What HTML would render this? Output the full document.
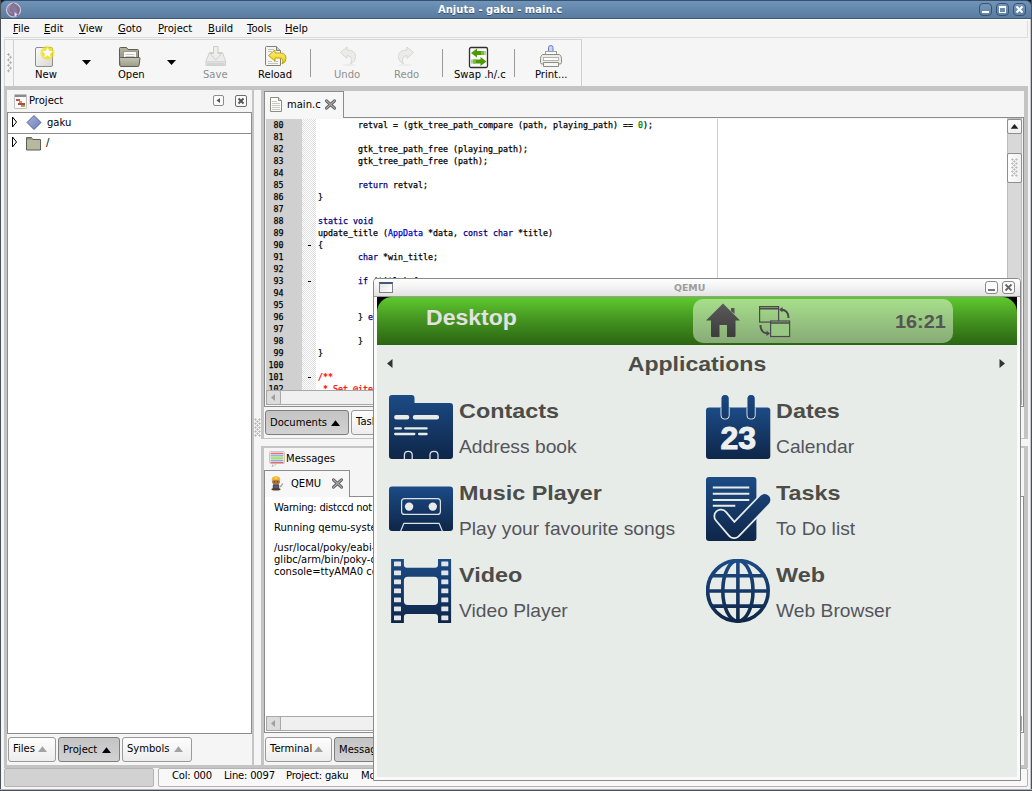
<!DOCTYPE html>
<html>
<head>
<meta charset="utf-8">
<title>Anjuta - gaku - main.c</title>
<style>
html,body{margin:0;padding:0;}
body{width:1032px;height:791px;overflow:hidden;position:relative;background:#f5f5f5;font-family:"DejaVu Sans","Liberation Sans",sans-serif;font-size:10px;color:#000;}
.a{position:absolute;}
.t{position:absolute;white-space:pre;line-height:12px;margin-top:1px;}
.q.t,#code .t{margin-top:0}
.u{text-decoration:underline;}
.dis{color:#8e8e8e;}
#code .t{font-family:"DejaVu Sans Mono","Liberation Mono",monospace;font-size:8.3px;letter-spacing:0.003px;line-height:12px;color:#000;-webkit-text-stroke:0.25px;}
.kw{color:#00007f;}
.ty{color:#0000d0;}
.cm{color:#ff0000;}
.nm{color:#007f00;}
.btn{position:absolute;box-sizing:border-box;border:1px solid #9a9a9a;border-radius:3px;background:linear-gradient(#fdfdfd,#ededed);}
.btn.on{background:linear-gradient(#c4c4c4,#d2d2d2);border-color:#7e7e7e;}
.q{font-family:"Liberation Sans",sans-serif;}
</style>
</head>
<body>
<!-- ===== main window chrome ===== -->
<div class="a" style="left:0;top:0;width:1032px;height:10px;background:#10151c;"></div>
<div class="a" id="titlebar" style="left:0;top:0;width:1032px;height:19px;background:linear-gradient(#7194b8,#668aae 40%,#5a7b9f);border:1px solid #34506f;border-bottom:1px solid #3d5674;border-radius:6px 6px 0 0;box-sizing:border-box;"></div>
<div class="a" style="left:1px;top:19px;width:1029px;height:1px;background:#fff;"></div>
<div class="t" style="left:438px;top:3px;font-weight:bold;color:#fff;text-shadow:0 1px 0 #34506f;">Anjuta - gaku - main.c</div>
<svg class="a" style="left:5px;top:1px;" width="18" height="17" viewBox="0 0 18 17"><defs><radialGradient id="ag" cx="0.4" cy="0.35"><stop offset="0" stop-color="#b8a8c4"/><stop offset="1" stop-color="#7c6a90"/></radialGradient></defs><circle cx="8.500" cy="9" r="7" fill="url(#ag)" stroke="#d4c8dc" stroke-width="1.200"/><path d="M7 4 Q8 1.500 9 2.500 Q9.500 4 12 6.500 Q14 10 13 15 H9 Q10 11 7 10 Q4.500 10.500 5 8 Q5 5.500 7 4 Z" fill="#8a789c" stroke="#6c5a80" stroke-width="0.6"/><path d="M9.500 11 L12.500 13.500 L9.500 16 Z" fill="#e8dcf0"/></svg>
<div class="a" style="left:979px;top:3px;width:13px;height:13px;box-sizing:border-box;border:1px solid #3a516f;border-radius:4px;background:linear-gradient(#7496b9,#6283a7);"></div>
<div class="a" style="left:982px;top:11px;width:7px;height:2px;background:#fff;"></div>
<div class="a" style="left:996px;top:3px;width:13px;height:13px;box-sizing:border-box;border:1px solid #3a516f;border-radius:4px;background:linear-gradient(#7496b9,#6283a7);"></div>
<div class="a" style="left:999px;top:6px;width:7px;height:7px;box-sizing:border-box;border:1px solid #fff;border-top-width:2px;"></div>
<div class="a" style="left:1013px;top:3px;width:13px;height:13px;box-sizing:border-box;border:1px solid #3a516f;border-radius:4px;background:linear-gradient(#7496b9,#6283a7);"></div>
<svg class="a" style="left:1013px;top:3px;" width="13" height="13"><path d="M3.500 3.500 L9.500 9.500 M9.500 3.500 L3.500 9.500" stroke="#fff" stroke-width="2" fill="none"/></svg>
<!-- window borders -->
<div class="a" style="left:0;top:0;width:1px;height:791px;background:#4c5058;"></div>
<div class="a" style="left:1030px;top:19px;width:1px;height:772px;background:#c4c4c4;"></div>
<div class="a" style="left:1031px;top:0;width:1px;height:791px;background:#4c5058;"></div>
<div class="a" style="left:0;top:790px;width:1032px;height:1px;background:#4c5058;"></div>
<div class="a" style="left:0;top:789px;width:1032px;height:1px;background:#b4b4b4;"></div>

<!-- ===== menubar ===== -->
<div class="a" style="left:4px;top:37px;width:1024px;height:1px;background:#dcdcdc;"></div>
<div class="a" style="left:1027px;top:21px;width:1px;height:17px;background:#dcdcdc;"></div>
<div class="t" style="left:13px;top:22px;"><span class="u">F</span>ile</div>
<div class="t" style="left:44px;top:22px;"><span class="u">E</span>dit</div>
<div class="t" style="left:79px;top:22px;"><span class="u">V</span>iew</div>
<div class="t" style="left:118px;top:22px;"><span class="u">G</span>oto</div>
<div class="t" style="left:158px;top:22px;"><span class="u">P</span>roject</div>
<div class="t" style="left:208px;top:22px;"><span class="u">B</span>uild</div>
<div class="t" style="left:247px;top:22px;"><span class="u">T</span>ools</div>
<div class="t" style="left:285px;top:22px;"><span class="u">H</span>elp</div>

<!-- ===== toolbar ===== -->
<div class="a" id="toolbar" style="left:4px;top:39px;width:578px;height:48px;box-sizing:border-box;border:1px solid #d6d6d6;border-right-color:#cfcfcf;background:#f6f6f6;"></div>
<div class="a" style="left:13px;top:40px;width:1px;height:46px;background:#d0d0d0;"></div>
<!-- handle dots -->
<svg class="a" style="left:6px;top:52px;" width="8" height="22"><path d="M1.00 2.50 h3 M2.50 1.00 v3 M3.00 5.22 h3 M4.50 3.72 v3 M1.00 7.94 h3 M2.50 6.44 v3 M3.00 10.66 h3 M4.50 9.16 v3 M1.00 13.38 h3 M2.50 11.88 v3 M3.00 16.10 h3 M4.50 14.60 v3 M1.00 18.82 h3 M2.50 17.32 v3 " stroke="#b0b0b0" stroke-width="0.9" fill="none"/></svg>
<!-- New -->
<svg class="a" style="left:33px;top:44px;" width="26" height="26" viewBox="0 0 26 26"><defs><linearGradient id="pg" x1="0" y1="0" x2="1" y2="1"><stop offset="0" stop-color="#fbfbfb"/><stop offset="1" stop-color="#d6d6d2"/></linearGradient><radialGradient id="yg"><stop offset="0.4" stop-color="#f4e000"/><stop offset="0.75" stop-color="#f0e020" stop-opacity="0.65"/><stop offset="1" stop-color="#f0e860" stop-opacity="0"/></radialGradient></defs><rect x="2.500" y="3.500" width="17" height="19" rx="1.500" fill="url(#pg)" stroke="#8e8e8a"/><circle cx="14.5" cy="8.9" r="8" fill="url(#yg)"/><path d="M14.50 2.70 L16.32 6.39 L20.40 6.98 L17.45 9.86 L18.14 13.92 L14.50 12.00 L10.86 13.92 L11.55 9.86 L8.60 6.98 L12.68 6.39 Z" fill="#fff" stroke="#f4dc20" stroke-width="0.7" stroke-linejoin="round"/></svg>
<div class="t" style="left:35px;top:68px;">New</div>
<svg class="a" style="left:81px;top:59px;" width="11" height="7"><path d="M1 1 H10 L5.500 6 Z" fill="#000"/></svg>
<!-- Open -->
<svg class="a" style="left:117px;top:45px;" width="26" height="24" viewBox="0 0 26 24"><defs><linearGradient id="fo" x1="0" y1="0" x2="0" y2="1"><stop offset="0" stop-color="#b4b4a0"/><stop offset="1" stop-color="#8a8a78"/></linearGradient><linearGradient id="ff" x1="0" y1="0" x2="0" y2="1"><stop offset="0" stop-color="#c4c4b4"/><stop offset="1" stop-color="#9c9c88"/></linearGradient></defs><path d="M3.500 2.500 H9.500 L11 4.500 H20.500 Q21.500 4.500 21.500 5.500 V20 H3 Q2.500 20 2.500 19 V3.500 Q2.500 2.500 3.500 2.500 Z" fill="url(#fo)" stroke="#5c5c50"/><rect x="6.500" y="6.500" width="13" height="9" fill="#fafafa" stroke="#9a9a90"/><path d="M8.500 9.500 h9 M8.500 11.500 h9" stroke="#c8c8c0"/><path d="M2.500 13.500 Q2.500 12.500 3.500 12.500 H22 Q23 12.500 23 13.500 L22 20.500 Q21.800 21.500 20.800 21.500 H4 Q3 21.500 2.900 20.500 Z" fill="url(#ff)" stroke="#5c5c50"/></svg>
<div class="t" style="left:118px;top:68px;">Open</div>
<svg class="a" style="left:166px;top:59px;" width="11" height="7"><path d="M1 1 H10 L5.500 6 Z" fill="#000"/></svg>
<!-- Save (disabled) -->
<svg class="a" style="left:203px;top:44px;" width="26" height="26" viewBox="0 0 26 26"><path d="M3 17 L6.500 8.500 H19.500 L22.500 17 V21.500 H3 Z" fill="#ececec" stroke="#cfcfcf"/><path d="M3.500 17.500 H22" stroke="#d8d8d8"/><rect x="4" y="18.500" width="17.500" height="3" fill="#d4d4d4"/><path d="M10.500 2.500 H15 V9.500 H18.500 L12.800 16 L7 9.500 H10.500 Z" fill="#eeeeec" stroke="#cdcdc8"/></svg>
<div class="t dis" style="left:203px;top:68px;">Save</div>
<!-- Reload -->
<svg class="a" style="left:262px;top:44px;" width="28" height="26" viewBox="0 0 28 26"><defs><linearGradient id="ya" x1="0" y1="0" x2="0" y2="1"><stop offset="0" stop-color="#fdf28a"/><stop offset="1" stop-color="#e8c800"/></linearGradient></defs><path d="M4.500 2.500 H14.500 L18.500 6.500 V21.500 H4.500 Q3.500 21.500 3.500 20.500 V3.500 Q3.500 2.500 4.500 2.500 Z" fill="#f4f4f2" stroke="#80807a"/><path d="M14.500 2.500 V6.500 H18.500" fill="#d0d0cc" stroke="#80807a"/><path d="M6 5.500 h6 M6 7.500 h4 M6 17.500 h4 M6 19.500 h10 M12 17.500 h4" stroke="#c4c4bc"/><path d="M6.500 11.500 L13 6 V9 H19 Q24 9.500 24 14.500 Q24 18.500 20 20 Q21.500 17.500 20.500 15.500 Q19.500 14 17 14 H13 V17 Z" fill="url(#ya)" stroke="#b89c00" stroke-width="0.9"/></svg>
<div class="t" style="left:258px;top:68px;">Reload</div>
<div class="a" style="left:310px;top:49px;width:1px;height:28px;background:#9a9a9a;"></div>
<!-- Undo (disabled) -->
<svg class="a" style="left:338px;top:45px;" width="22" height="22" viewBox="0 0 22 22"><path d="M2.500 7.500 L9 2 V5 Q17.500 5 17.500 11.500 Q17.500 16.500 12.500 19 Q13.500 17.500 13.500 14.500 Q13 10.500 9 10.500 V13.500 Z" fill="#ebebe8" stroke="#d4d4d0" stroke-width="0.9"/><ellipse cx="11" cy="20" rx="7" ry="1.200" fill="#ececec"/></svg>
<div class="t dis" style="left:334px;top:68px;">Undo</div>
<!-- Redo (disabled) -->
<svg class="a" style="left:394px;top:45px;" width="22" height="22" viewBox="0 0 22 22"><path d="M19.500 7.500 L13 2 V5 Q4.500 5 4.500 11.500 Q4.500 16.500 9.500 19 Q8.500 17.500 8.500 14.500 Q9 10.500 13 10.500 V13.500 Z" fill="#ebebe8" stroke="#d4d4d0" stroke-width="0.9"/><ellipse cx="11" cy="20" rx="7" ry="1.200" fill="#ececec"/></svg>
<div class="t dis" style="left:394px;top:68px;">Redo</div>
<div class="a" style="left:442px;top:49px;width:1px;height:28px;background:#9a9a9a;"></div>
<!-- Swap -->
<svg class="a" style="left:468px;top:46px;" width="22" height="23" viewBox="0 0 22 23"><rect x="1.500" y="1.500" width="18" height="20" rx="1.500" fill="#fafafa" stroke="#303030" stroke-width="1.300"/><path d="M3 7 L9 2.500 V5 H16 V9 H9 V11.500 Z" fill="#4e9a06"/><path d="M18.500 15.500 L12.500 11 V13.500 H5 V17.500 H12.500 V20 Z" fill="#4e9a06"/><rect x="13" y="5" width="5" height="4" fill="#8cc460" opacity="0.7"/><rect x="3" y="13.500" width="5" height="4" fill="#8cc460" opacity="0.7"/></svg>
<div class="t" style="left:454px;top:68px;">Swap .h/.c</div>
<div class="a" style="left:514px;top:49px;width:1px;height:28px;background:#9a9a9a;"></div>
<!-- Print -->
<svg class="a" style="left:538px;top:44px;" width="26" height="26" viewBox="0 0 26 26"><path d="M10.500 8 V3.500 Q10.500 1.500 12.800 1.500 Q15 1.500 15 3.500 V8" fill="#c8d4f0" stroke="#6a80c0"/><rect x="7.500" y="7.500" width="11" height="5" fill="#fcfcfc" stroke="#a0a09a"/><path d="M4.500 10.500 H21.500 Q23.500 12 23.500 14.500 V18.500 Q23.500 20 22 20 H4 Q2.500 20 2.500 18.500 V14.500 Q2.500 12 4.500 10.500 Z" fill="#ecece8" stroke="#8c8c86"/><rect x="5.500" y="13.500" width="15" height="3" fill="#fff" stroke="#b4b4ae"/><path d="M5.500 18.500 H20.500 V22.500 H5.500 Z" fill="#f6f6f4" stroke="#8c8c86"/></svg>
<div class="t" style="left:535px;top:68px;">Print...</div>


<!-- ===== dock background ===== -->
<div class="a" id="dock" style="left:4px;top:86px;width:1024px;height:682px;background:#c4c4c4;"></div>
<!-- left panel -->
<div class="a" style="left:7px;top:90px;width:245px;height:675px;background:#f5f5f5;"></div>
<div class="a" style="left:14px;top:94px;width:13px;height:15px;box-sizing:border-box;border:1px solid #c0c0c0;border-radius:1px;background:#fbfbfb;"></div>
<div class="a" style="left:15px;top:95px;width:11px;height:2px;background:#8a8a8a;"></div>
<div class="a" style="left:16px;top:99px;width:4px;height:2px;background:#c0505a;"></div>
<div class="a" style="left:19px;top:101px;width:3px;height:2px;background:#b8a040;"></div>
<div class="a" style="left:18px;top:103px;width:7px;height:2px;background:#b04850;"></div>
<div class="a" style="left:21px;top:105px;width:4px;height:2px;background:#b8a040;"></div>
<div class="t" style="left:29px;top:94px;">Project</div>
<div class="a" style="left:213px;top:95px;width:11px;height:11px;box-sizing:border-box;border:1px solid #8c8c8c;border-radius:2px;background:#fafafa;"></div>
<svg class="a" style="left:213px;top:95px;" width="11" height="11"><path d="M7 3 L3.5 5.5 L7 8 Z" fill="#555"/></svg>
<div class="a" style="left:235px;top:95px;width:12px;height:12px;box-sizing:border-box;border:1px solid #6e6e6e;border-radius:2px;background:#fafafa;"></div>
<svg class="a" style="left:235px;top:95px;" width="12" height="12"><path d="M3.5 3.5 L8.5 8.5 M8.5 3.5 L3.5 8.5" stroke="#555" stroke-width="2" fill="none"/></svg>
<div class="a" style="left:7px;top:112px;width:245px;height:622px;box-sizing:border-box;border:1px solid #8c8c8c;background:#fff;"></div>
<div class="a" style="left:8px;top:133px;width:243px;height:1px;background:#8c8c8c;"></div>
<svg class="a" style="left:10px;top:115px;" width="10" height="36"><path d="M2.5 2 L6.5 7 L2.5 12 Z" fill="#fff" stroke="#000" stroke-width="1"/><path d="M2.5 22 L6.5 27 L2.5 32 Z" fill="#fff" stroke="#000" stroke-width="1"/></svg>
<svg class="a" style="left:25px;top:114px;" width="18" height="18"><defs><linearGradient id="dg" x1="0" y1="0" x2="1" y2="1"><stop offset="0" stop-color="#a8b4dc"/><stop offset="1" stop-color="#6c7cb8"/></linearGradient></defs><path d="M9 1.5 L16 8.5 L9 15.5 L2 8.5 Z" fill="url(#dg)" stroke="#5060a0" stroke-width="1"/></svg>
<div class="t" style="left:47px;top:116px;">gaku</div>
<svg class="a" style="left:25px;top:134px;" width="18" height="18"><path d="M1.5 3.5 h5 l1 2 h8 v10.5 h-14 Z" fill="#b8b8a0" stroke="#5f5f52" stroke-width="1"/><path d="M2 3.8 h4.5 l0.8 1.8 h-5.3 Z" fill="#8e8e7c"/></svg>
<div class="t" style="left:46px;top:136px;">/</div>
<div class="btn" style="left:8px;top:737px;width:48px;height:25px;"></div>
<div class="t" style="left:13px;top:742px;">Files</div><svg class="a" style="left:38px;top:746px;" width="9" height="6"><path d="M0 6 L4.500 0.300 L9 6 Z" fill="#a2a2a2"/></svg>
<div class="btn on" style="left:58px;top:737px;width:62px;height:25px;"></div>
<div class="t" style="left:63px;top:743px;">Project</div><svg class="a" style="left:102px;top:747px;" width="9" height="6"><path d="M0 6 L4.500 0.300 L9 6 Z" fill="#000"/></svg>
<div class="btn" style="left:122px;top:737px;width:70px;height:25px;"></div>
<div class="t" style="left:127px;top:742px;">Symbols</div><svg class="a" style="left:174px;top:746px;" width="9" height="6"><path d="M0 6 L4.500 0.300 L9 6 Z" fill="#a2a2a2"/></svg>

<!-- splitter between panels -->
<div class="a" style="left:254px;top:90px;width:7px;height:675px;background:#f5f5f5;"></div>
<svg class="a" style="left:254px;top:417px;" width="8" height="22"><path d="M0.2 2.5 h2.6 M1.5 1.2 v2.6 M4.2 2.5 h2.6 M5.5 1.2 v2.6 M0.2 6.5 h2.6 M1.5 5.2 v2.6 M4.2 6.5 h2.6 M5.5 5.2 v2.6 M0.2 10.5 h2.6 M1.5 9.2 v2.6 M4.2 10.5 h2.6 M5.5 9.2 v2.6 M0.2 14.5 h2.6 M1.5 13.2 v2.6 M4.2 14.5 h2.6 M5.5 13.2 v2.6 M0.2 18.5 h2.6 M1.5 17.2 v2.6 M4.2 18.5 h2.6 M5.5 17.2 v2.6 M2.2 4.5 h2.6 M3.5 3.2 v2.6 M2.2 8.5 h2.6 M3.5 7.2 v2.6 M2.2 12.5 h2.6 M3.5 11.2 v2.6 M2.2 16.5 h2.6 M3.5 15.2 v2.6 " stroke="#b4b4b4" stroke-width="0.8" fill="none"/></svg>

<!-- right top panel: editor notebook -->
<div class="a" style="left:264px;top:91px;width:760px;height:347px;background:#f5f5f5;"></div>
<div class="a" style="left:264px;top:117px;width:760px;height:290px;box-sizing:border-box;border:1px solid #8c8c8c;background:#f5f5f5;"></div>
<div class="a" style="left:264px;top:91px;width:80px;height:27px;box-sizing:border-box;border:1px solid #8c8c8c;border-bottom:none;background:#f7f7f7;"></div>
<svg class="a" style="left:269px;top:96px;" width="15" height="18"><path d="M1.5 1.5 h8 l3 3 v11 h-11 Z" fill="#fcfcfc" stroke="#8c8c84" stroke-width="1"/><path d="M9.5 1.5 v3 h3" fill="#e0e0e0" stroke="#8c8c84" stroke-width="1"/><path d="M3 5.5 h5 M3 7.5 h8 M3 9.5 h8 M3 11.5 h8 M3 13.5 h8" stroke="#c8c8c0" stroke-width="1"/></svg>
<div class="t" style="left:287px;top:98px;">main.c</div>
<svg class="a" style="left:323px;top:97px;" width="15" height="15"><path d="M3.500 3.800 L11.500 11.200 M11.500 3.800 L3.500 11.200" stroke="#555" stroke-width="3" stroke-linecap="round"/><path d="M3.500 3.800 L11.500 11.200 M11.500 3.800 L3.500 11.200" stroke="#a8a8a8" stroke-width="1.300" stroke-linecap="round"/></svg>
<div class="a" id="code" style="left:266px;top:119px;width:741px;height:271px;overflow:hidden;background:#fff;">
<div class="a" style="left:0;top:0;width:36px;height:272px;background:#d0d0d0;"></div>
<div class="a" style="left:36px;top:0;width:14px;height:272px;background:#f0f0f0;background-image:conic-gradient(#e0e0e0 25%,#fff 0 50%,#e0e0e0 0 75%,#fff 0);background-size:2px 2px;"></div>
<div class="a" style="left:451px;top:0;width:1px;height:272px;background:#b4e0b4;"></div>
<div class="t" style="left:7.5px;top:0px;">80</div>
<div class="t" style="left:52px;top:0px;tab-size:8;">	retval = (gtk_tree_path_compare (path, playing_path) == <span class="nm">0</span>);</div>
<div class="t" style="left:7.5px;top:12px;">81</div>
<div class="t" style="left:7.5px;top:24px;">82</div>
<div class="t" style="left:52px;top:24px;tab-size:8;">	gtk_tree_path_free (playing_path);</div>
<div class="t" style="left:7.5px;top:36px;">83</div>
<div class="t" style="left:52px;top:36px;tab-size:8;">	gtk_tree_path_free (path);</div>
<div class="t" style="left:7.5px;top:48px;">84</div>
<div class="t" style="left:7.5px;top:60px;">85</div>
<div class="t" style="left:52px;top:60px;tab-size:8;">	<span class="kw">return</span> retval;</div>
<div class="t" style="left:7.5px;top:72px;">86</div>
<div class="t" style="left:52px;top:72px;tab-size:8;">}</div>
<div class="t" style="left:7.5px;top:84px;">87</div>
<div class="t" style="left:7.5px;top:96px;">88</div>
<div class="t" style="left:52px;top:96px;tab-size:8;"><span class="kw">static void</span></div>
<div class="t" style="left:7.5px;top:108px;">89</div>
<div class="t" style="left:52px;top:108px;tab-size:8;">update_title (<span class="ty">AppData</span> *data, <span class="kw">const char</span> *title)</div>
<div class="t" style="left:7.5px;top:120px;">90</div>
<div class="a" style="left:42px;top:126px;width:3px;height:1px;background:#000;"></div>
<div class="t" style="left:52px;top:120px;tab-size:8;">{</div>
<div class="t" style="left:7.5px;top:132px;">91</div>
<div class="t" style="left:52px;top:132px;tab-size:8;">	<span class="kw">char</span> *win_title;</div>
<div class="t" style="left:7.5px;top:144px;">92</div>
<div class="t" style="left:7.5px;top:156px;">93</div>
<div class="a" style="left:42px;top:162px;width:3px;height:1px;background:#000;"></div>
<div class="t" style="left:52px;top:156px;tab-size:8;">	<span class="kw">if</span> (title) {</div>
<div class="t" style="left:7.5px;top:168px;">94</div>
<div class="t" style="left:52px;top:168px;tab-size:8;">		win_title = g_strdup_printf ("%s - %s", title, _("Music Player"));</div>
<div class="t" style="left:7.5px;top:180px;">95</div>
<div class="t" style="left:7.5px;top:192px;">96</div>
<div class="t" style="left:52px;top:192px;tab-size:8;">	} <span class="kw">else</span> {</div>
<div class="t" style="left:7.5px;top:204px;">97</div>
<div class="t" style="left:52px;top:204px;tab-size:8;">		win_title = g_strdup (_("Music Player"));</div>
<div class="t" style="left:7.5px;top:216px;">98</div>
<div class="t" style="left:52px;top:216px;tab-size:8;">	}</div>
<div class="t" style="left:7.5px;top:228px;">99</div>
<div class="t" style="left:52px;top:228px;tab-size:8;">}</div>
<div class="t" style="left:2.5px;top:240px;">100</div>
<div class="t" style="left:2.5px;top:252px;">101</div>
<div class="a" style="left:42px;top:258px;width:3px;height:1px;background:#000;"></div>
<div class="t" style="left:52px;top:252px;tab-size:8;"><span class="cm">/**</span></div>
<div class="t" style="left:2.5px;top:264px;">102</div>
<div class="t" style="left:52px;top:264px;tab-size:8;"><span class="cm"> * Set @iter to the next or previous item in the playlist.</span></div>
</div>
<div class="a" style="left:1007px;top:118px;width:15px;height:272px;box-sizing:border-box;border:1px solid #bdbdbd;background:#d8d8d8;"></div>
<div class="a" style="left:1007px;top:119px;width:15px;height:15px;box-sizing:border-box;border:1px solid #8e8e8e;border-radius:2px;background:linear-gradient(#fdfdfd,#efefef);"></div>
<svg class="a" style="left:1007px;top:119px;" width="15" height="15"><path d="M3.700 9.700 L7.500 5 L11.300 9.700 Z" fill="#222"/></svg>
<div class="a" style="left:1007px;top:153px;width:15px;height:30px;box-sizing:border-box;border:1px solid #8e8e8e;border-radius:2px;background:linear-gradient(90deg,#fdfdfd,#f0f0f0);"></div>
<svg class="a" style="left:1007px;top:153px;" width="15" height="30"><path d="M4.1 6.5 h2.6 M5.4 5.2 v2.6 M8.1 6.5 h2.6 M9.4 5.2 v2.6 M4.1 10.5 h2.6 M5.4 9.2 v2.6 M8.1 10.5 h2.6 M9.4 9.2 v2.6 M4.1 14.5 h2.6 M5.4 13.2 v2.6 M8.1 14.5 h2.6 M9.4 13.2 v2.6 M4.1 18.5 h2.6 M5.4 17.2 v2.6 M8.1 18.5 h2.6 M9.4 17.2 v2.6 M4.1 22.5 h2.6 M5.4 21.2 v2.6 M8.1 22.5 h2.6 M9.4 21.2 v2.6 M6.1 8.5 h2.6 M7.4 7.2 v2.6 M6.1 12.5 h2.6 M7.4 11.2 v2.6 M6.1 16.5 h2.6 M7.4 15.2 v2.6 M6.1 20.5 h2.6 M7.4 19.2 v2.6 " stroke="#b8b8b8" stroke-width="0.8" fill="none"/></svg>
<div class="a" style="left:266px;top:390px;width:756px;height:15px;box-sizing:border-box;border:1px solid #a8a8a8;background:#f0f0f0;"></div>
<div class="a" style="left:266px;top:390px;width:15px;height:15px;box-sizing:border-box;border:1px solid #a8a8a8;border-radius:2px;background:#dcdcdc;"></div>
<svg class="a" style="left:266px;top:390px;" width="15" height="15"><path d="M9 4 L5 7.5 L9 11 Z" fill="#a0a0a0"/></svg>
<!-- documents/tasks buttons -->
<div class="btn on" style="left:265px;top:410px;width:84px;height:25px;"></div>
<div class="t" style="left:270px;top:416px;">Documents</div><svg class="a" style="left:331px;top:420px;" width="9" height="6"><path d="M0 6 L4.500 0.300 L9 6 Z" fill="#000"/></svg>
<div class="btn" style="left:351px;top:410px;width:60px;height:25px;"></div>
<div class="t" style="left:356px;top:415px;">Tasks</div><svg class="a" style="left:388px;top:419px;" width="9" height="6"><path d="M0 6 L4.500 0.300 L9 6 Z" fill="#a2a2a2"/></svg>
<!-- horizontal splitter -->
<div class="a" style="left:261px;top:439px;width:767px;height:7px;background:#f5f5f5;"></div>
<!-- messages panel -->
<div class="a" style="left:264px;top:448px;width:760px;height:317px;background:#f5f5f5;"></div>
<svg class="a" style="left:269px;top:451px;" width="17" height="18"><rect x="0.500" y="0.500" width="15" height="12" rx="1" fill="#fbfbfb" stroke="#c8c8c8"/><rect x="1.500" y="1.70" width="13" height="1.250" fill="#e66464"/><rect x="1.500" y="3.55" width="13" height="1.250" fill="#8a9ed0"/><rect x="1.500" y="5.40" width="13" height="1.250" fill="#94cc66"/><rect x="1.500" y="7.25" width="13" height="1.250" fill="#94cc66"/><rect x="1.500" y="9.10" width="13" height="1.250" fill="#8a9ed0"/><rect x="1.500" y="10.95" width="13" height="1.250" fill="#e66464"/><path d="M4 13 L3 15.800 L7.500 13" fill="#fff" stroke="#b4b4b4" stroke-width="0.800"/></svg>
<div class="t" style="left:286px;top:452px;">Messages</div>
<div class="a" style="left:264px;top:496px;width:760px;height:237px;box-sizing:border-box;border:1px solid #8c8c8c;background:#fff;"></div>
<div class="a" style="left:264px;top:470px;width:86px;height:27px;box-sizing:border-box;border:1px solid #8c8c8c;border-bottom:none;background:#f7f7f7;"></div>
<svg class="a" style="left:270px;top:475px;" width="14" height="16" viewBox="0 0 14 16"><ellipse cx="6" cy="14.300" rx="4.600" ry="1.200" fill="#5a3a20"/><rect x="2.800" y="9" width="6.400" height="5" rx="1.500" fill="#4a4038"/><rect x="3.600" y="10.300" width="4.800" height="2.800" fill="#46628c"/><ellipse cx="6" cy="6.800" rx="4" ry="3" fill="#b07a44"/><path d="M1.600 5.600 Q1.600 1.200 6 1.200 Q10.400 1.200 10.400 5.600 Q6 4.200 1.600 5.600 Z" fill="#f0b42c"/><path d="M4.800 1.300 h2.400 v3 h-2.400 Z" fill="#f8cc50"/><path d="M9.600 11.500 L12.400 8 L13.300 9 L10.800 12.500 Z" fill="#a8a8a0"/><circle cx="4.600" cy="6.800" r="0.600" fill="#3a2410"/><circle cx="7.400" cy="6.800" r="0.600" fill="#3a2410"/></svg>
<div class="t" style="left:291px;top:477px;">QEMU</div>
<svg class="a" style="left:330px;top:476px;" width="15" height="15"><path d="M3.500 3.800 L11.500 11.200 M11.500 3.800 L3.500 11.200" stroke="#555" stroke-width="3" stroke-linecap="round"/><path d="M3.500 3.800 L11.500 11.200 M11.500 3.800 L3.500 11.200" stroke="#a8a8a8" stroke-width="1.300" stroke-linecap="round"/></svg>
<div class="t" style="left:274px;top:501px;letter-spacing:-0.25px;">Warning: distccd not present, not going to setup distcc.</div>
<div class="t" style="left:274px;top:521px;">Running qemu-system-arm using sudo...</div>
<div class="t" style="left:274px;top:541px;">/usr/local/poky/eabi-glibc/arm/bin/qemu-system-arm -kernel zImage -M versatilepb
glibc/arm/bin/poky-qemu-ifup tap0 -usb -usbdevice wacom-tablet -append root=/dev/sda
console=ttyAMA0 console=tty0 mem=128M</div>
<div class="a" style="left:266px;top:716px;width:756px;height:15px;box-sizing:border-box;border:1px solid #a8a8a8;background:#f0f0f0;"></div>
<div class="a" style="left:266px;top:716px;width:15px;height:15px;box-sizing:border-box;border:1px solid #a8a8a8;border-radius:2px;background:#dcdcdc;"></div>
<svg class="a" style="left:266px;top:716px;" width="15" height="15"><path d="M9 4 L5 7.5 L9 11 Z" fill="#a0a0a0"/></svg>
<div class="btn" style="left:265px;top:737px;width:67px;height:25px;"></div>
<div class="t" style="left:270px;top:742px;">Terminal</div><svg class="a" style="left:314px;top:746px;" width="9" height="6"><path d="M0 6 L4.500 0.300 L9 6 Z" fill="#a2a2a2"/></svg>
<div class="btn on" style="left:334px;top:737px;width:80px;height:25px;"></div>
<div class="t" style="left:339px;top:743px;">Messages</div><svg class="a" style="left:392px;top:747px;" width="9" height="6"><path d="M0 6 L4.500 0.300 L9 6 Z" fill="#000"/></svg>


<!-- ===== status bar ===== -->
<div class="a" style="left:4px;top:768px;width:150px;height:19px;box-sizing:border-box;border:1px solid #b4b4b4;border-radius:2px;background:#d2d2d2;"></div>
<div class="a" style="left:158px;top:768px;width:870px;height:19px;box-sizing:border-box;border:1px solid #b4b4b4;border-radius:2px;background:#f8f8f8;"></div>
<div class="t" style="left:172px;top:768px;line-height:14px;letter-spacing:-0.2px;">Col: 000</div><div class="t" style="left:224px;top:768px;line-height:14px;letter-spacing:-0.2px;">Line: 0097</div><div class="t" style="left:286px;top:768px;line-height:14px;letter-spacing:-0.2px;">Project: gaku</div><div class="t" style="left:361px;top:768px;line-height:14px;letter-spacing:-0.2px;">Mode: INS</div><div class="t" style="left:420px;top:768px;line-height:14px;letter-spacing:-0.2px;">Zoom: 0</div>


<!-- ===== QEMU window ===== -->
<div class="a" id="qemuwin" style="left:373px;top:278px;width:648px;height:503px;box-sizing:border-box;border:1px solid #8a8a8a;border-radius:4px 4px 0 0;background:#fafafa;"></div>
<div class="a" style="left:374px;top:279px;width:646px;height:17px;background:linear-gradient(#fefefe,#f4f4f4 45%,#e2e2e2);border-radius:3px 3px 0 0;"></div>
<div class="a" style="left:374px;top:296px;width:646px;height:1px;background:#9c9c9c;"></div>
<div class="a" style="left:379px;top:282px;width:14px;height:11px;box-sizing:border-box;border:1px solid #808080;border-top:2px solid #3e5a78;background:linear-gradient(135deg,#e4e4e4,#fff);"></div>
<div class="t" style="left:674px;top:281px;font-weight:bold;font-size:9.4px;color:#9c9c9c;">QEMU</div>
<div class="a" style="left:985px;top:281px;width:13px;height:13px;box-sizing:border-box;border:1px solid #8a8a8a;border-radius:3px;background:#fbfbfb;"></div>
<div class="a" style="left:988px;top:289px;width:7px;height:2px;background:#777;"></div>
<div class="a" style="left:1002px;top:281px;width:13px;height:13px;box-sizing:border-box;border:1px solid #8a8a8a;border-radius:3px;background:#fbfbfb;"></div>
<svg class="a" style="left:1002px;top:281px;" width="13" height="13"><path d="M3.5 3.5 L9.5 9.5 M9.5 3.5 L3.5 9.5" stroke="#666" stroke-width="1.8" fill="none"/></svg>
<!-- screen 640x480 -->
<div class="a q" id="screen" style="left:377px;top:297px;width:640px;height:480px;background:#e8ece8;overflow:hidden;">
 <div class="a" style="left:0;top:0;width:640px;height:48px;background:#000;"></div>
 <div class="a" style="left:0;top:0;width:640px;height:48px;border-radius:15px 15px 0 0;background:linear-gradient(#5ec82e,#57ba2a 14%,#489c23 40%,#3b831b 66%,#317015 88%,#2c6612);"></div>
 <div class="t q" style="left:49px;top:7px;font-size:22.6px;line-height:28px;font-weight:bold;color:#e2e2e2;transform:scaleX(1.02);transform-origin:0 0;">Desktop</div>
 <div class="a" style="left:316px;top:2px;width:260px;height:44px;border-radius:10px;background:linear-gradient(rgba(205,236,186,0.66),rgba(196,216,186,0.60));"></div>
 <!--home-->
 <svg class="a" style="left:328px;top:5px;" width="36" height="36" viewBox="0 0 36 36"><defs><linearGradient id="gk" x1="0" y1="0" x2="0" y2="1"><stop offset="0" stop-color="#5a5a5a"/><stop offset="1" stop-color="#3c3c3c"/></linearGradient></defs><path d="M18 1.5 L35 18.5 L30.5 18.5 L30.5 34 Q30.5 35 29.5 35 L22 35 L22 23 L14.5 23 L14.5 35 L7 35 Q6 35 6 34 L6 18.5 L1 18.5 Z M26 6 L29.5 6 L29.5 12 L26 9 Z" fill="url(#gk)"/></svg>
 <!--windows-->
 <svg class="a" style="left:381px;top:8px;" width="34" height="34" viewBox="0 0 34 34"><g fill="none" stroke="#4a4a4a" stroke-width="1.2"><rect x="1.6" y="1.6" width="19" height="15.5"/><rect x="12.6" y="16" width="19" height="15.5" fill="#98c883"/><path d="M1.6 3.6 h19 M12.6 18 h19" stroke-width="1.6"/><path d="M23 4.5 Q30.5 5 30.5 13" stroke-width="2"/><path d="M10 28.5 Q2.5 28 2.5 20" stroke-width="2"/></g><path d="M24.5 2 L21 4.5 L24.5 7.5 Z M8.5 25.5 L12 28.5 L8.5 31 Z" fill="#4a4a4a"/></svg>
 <div class="t q" style="left:518px;top:13px;font-size:18.2px;line-height:24px;font-weight:bold;color:#555;transform:scaleX(1.09);transform-origin:0 0;">16:21</div>
 <svg class="a" style="left:9px;top:61px;" width="8" height="12"><path d="M6.5 1 L1 5.5 L6.5 10 Z" fill="#333"/></svg>
 <svg class="a" style="left:621px;top:61px;" width="8" height="12"><path d="M1.5 1 L7 5.5 L1.5 10 Z" fill="#333"/></svg>
 <div class="t q" style="left:0;width:640px;text-align:center;top:53px;font-size:20.7px;line-height:28px;font-weight:bold;color:#4c4d49;transform:scaleX(1.116);transform-origin:50% 0;">Applications</div>
 <svg class="a" style="left:12px;top:98px;" width="64" height="64" viewBox="0 0 64 64"><defs><linearGradient id="gb" x1="0" y1="0" x2="0" y2="1"><stop offset="0" stop-color="#1c4b86"/><stop offset="1" stop-color="#0e2648"/></linearGradient></defs><path d="M3 0 H22.500 Q25.500 0 25.500 3 V8 H61 Q64 8 64 11 V61 Q64 64 61 64 H3 Q0 64 0 61 V3 Q0 0 3 0 Z" fill="url(#gb)"/><g stroke="#e8ece8" stroke-linecap="round" fill="none"><path d="M7.300 22.300 H18.100 M26 22.300 H47.900" stroke-width="4.400"/><path d="M6.200 33.400 H11.800 M16.300 33.400 H37.600 M6.200 39 H25.300 M30.100 39 H37.600" stroke-width="2.300"/><path d="M15.400 64 V60 Q15.400 56.300 19.300 56.300 Q23.200 56.300 23.200 60 V64 M41 64 V60 Q41 56.300 45 56.300 Q49 56.300 49 60 V64" stroke-width="1.300" stroke-linecap="butt" stroke="#d8dee4"/></g></svg>
<div class="t q" style="left:82px;top:99px;font-size:20.6px;line-height:28px;font-weight:bold;color:#4c4d49;transform:scaleX(1.135);transform-origin:0 0;margin-top:1px;">Contacts</div><div class="t q" style="left:82px;top:138px;font-size:18.2px;line-height:22px;color:#54555c;transform:scaleX(1.058);transform-origin:0 0;margin-top:1px;">Address book</div>
<svg class="a" style="left:12px;top:180px;" width="64" height="64" viewBox="0 0 64 64"><path d="M3 9.500 H61 Q64 9.500 64 12.500 V51 Q64 54 61 54 H3 Q0 54 0 51 V12.500 Q0 9.500 3 9.500 Z" fill="url(#gb)"/><rect x="12.600" y="21.600" width="38.800" height="15.800" rx="3" fill="none" stroke="#dde2e6" stroke-width="1.200"/><circle cx="20.100" cy="29.600" r="4.200" fill="#e8ece8"/><circle cx="43.800" cy="29.600" r="4.200" fill="#e8ece8"/><path d="M11.600 54.300 L14.800 46.400 H50.200 L53.400 54.300" fill="none" stroke="#dde2e6" stroke-width="1.200" stroke-linejoin="round"/></svg>
<div class="t q" style="left:82px;top:181px;font-size:20.6px;line-height:28px;font-weight:bold;color:#4c4d49;transform:scaleX(1.135);transform-origin:0 0;margin-top:1px;">Music Player</div><div class="t q" style="left:82px;top:220px;font-size:18.2px;line-height:22px;color:#54555c;transform:scaleX(1.058);transform-origin:0 0;margin-top:1px;">Play your favourite songs</div>
<svg class="a" style="left:12px;top:262px;" width="64" height="64" viewBox="0 0 64 64"><path d="M2.100 0 H14.900 V5.700 Q14.900 8.700 17.900 8.700 H46 Q49 8.700 49 5.700 V0 H62.100 V64 H49 V57.900 Q49 54.900 46 54.900 H17.900 Q14.900 54.900 14.900 57.900 V64 H2.100 Z" fill="url(#gb)"/><rect x="14.900" y="17.700" width="34.100" height="28.300" rx="4" fill="#e8ece8"/><rect x="5" y="2.4" width="7" height="4.800" rx="0.500" fill="#e2e6ea"/><rect x="52.300" y="2.4" width="7" height="4.800" rx="0.500" fill="#e2e6ea"/><rect x="5" y="11.4" width="7" height="4.800" rx="0.500" fill="#e2e6ea"/><rect x="52.300" y="11.4" width="7" height="4.800" rx="0.500" fill="#e2e6ea"/><rect x="5" y="20.4" width="7" height="4.800" rx="0.500" fill="#e2e6ea"/><rect x="52.300" y="20.4" width="7" height="4.800" rx="0.500" fill="#e2e6ea"/><rect x="5" y="29.4" width="7" height="4.800" rx="0.500" fill="#e2e6ea"/><rect x="52.300" y="29.4" width="7" height="4.800" rx="0.500" fill="#e2e6ea"/><rect x="5" y="38.4" width="7" height="4.800" rx="0.500" fill="#e2e6ea"/><rect x="52.300" y="38.4" width="7" height="4.800" rx="0.500" fill="#e2e6ea"/><rect x="5" y="47.4" width="7" height="4.800" rx="0.500" fill="#e2e6ea"/><rect x="52.300" y="47.4" width="7" height="4.800" rx="0.500" fill="#e2e6ea"/><rect x="5" y="56.4" width="7" height="4.800" rx="0.500" fill="#e2e6ea"/><rect x="52.300" y="56.4" width="7" height="4.800" rx="0.500" fill="#e2e6ea"/></svg>
<div class="t q" style="left:82px;top:263px;font-size:20.6px;line-height:28px;font-weight:bold;color:#4c4d49;transform:scaleX(1.135);transform-origin:0 0;margin-top:1px;">Video</div><div class="t q" style="left:82px;top:302px;font-size:18.2px;line-height:22px;color:#54555c;transform:scaleX(1.058);transform-origin:0 0;margin-top:1px;">Video Player</div>
<svg class="a" style="left:329px;top:98px;" width="66" height="64" viewBox="0 0 66 64"><rect x="0" y="12.500" width="64.300" height="51.500" rx="3" fill="url(#gb)"/><path d="M14.500 12.500 V19.500 Q14.500 24.500 19.100 24.500 Q23.700 24.500 23.700 19.500 V12.500 Z M40.500 12.500 V19.500 Q40.500 24.500 45.100 24.500 Q49.700 24.500 49.700 19.500 V12.500 Z" fill="#dfe4ea"/><rect x="15.600" y="0" width="7" height="23.400" rx="3.500" fill="url(#gb)"/><rect x="41.600" y="0" width="7" height="23.400" rx="3.500" fill="url(#gb)"/><rect x="15.600" y="0" width="7" height="23.400" rx="3.500" fill="#1b4880" opacity="0.600"/><rect x="41.600" y="0" width="7" height="23.400" rx="3.500" fill="#1b4880" opacity="0.600"/><text x="32.200" y="53.600" text-anchor="middle" font-family="Liberation Sans, sans-serif" font-weight="bold" font-size="32" fill="#eef0ee" stroke="#eef0ee" stroke-width="1" stroke-linejoin="round">23</text></svg>
<div class="t q" style="left:399px;top:99px;font-size:20.6px;line-height:28px;font-weight:bold;color:#4c4d49;transform:scaleX(1.135);transform-origin:0 0;margin-top:1px;">Dates</div><div class="t q" style="left:399px;top:138px;font-size:18.2px;line-height:22px;color:#54555c;transform:scaleX(1.058);transform-origin:0 0;margin-top:1px;">Calendar</div>
<svg class="a" style="left:329px;top:180px;" width="68" height="64" viewBox="0 0 68 64"><path d="M3 0 H47.400 Q50.400 0 50.400 3 V61 Q50.400 64 47.400 64 H3 Q0 64 0 61 V3 Q0 0 3 0 Z" fill="url(#gb)"/><g stroke="#e8ece8" stroke-width="2"><path d="M6.800 10.600 H43.300 M6.800 16.800 H43.300 M6.800 23 H43.300 M6.800 28.800 H29.300"/></g><defs><linearGradient id="gbu" gradientUnits="userSpaceOnUse" x1="0" y1="0" x2="0" y2="64"><stop offset="0" stop-color="#1c4b86"/><stop offset="1" stop-color="#0e2648"/></linearGradient></defs><path d="M14.900 39.200 L28.100 54.600 L58.700 22.800" fill="none" stroke="#e8ece8" stroke-width="14.900" stroke-linecap="round" stroke-linejoin="round"/><path d="M14.900 39.200 L28.100 54.600 L58.700 22.800" fill="none" stroke="url(#gbu)" stroke-width="11.400" stroke-linecap="round" stroke-linejoin="round"/></svg>
<div class="t q" style="left:399px;top:181px;font-size:20.6px;line-height:28px;font-weight:bold;color:#4c4d49;transform:scaleX(1.135);transform-origin:0 0;margin-top:1px;">Tasks</div><div class="t q" style="left:399px;top:220px;font-size:18.2px;line-height:22px;color:#54555c;transform:scaleX(1.058);transform-origin:0 0;margin-top:1px;">To Do list</div>
<svg class="a" style="left:329px;top:262px;" width="64" height="64" viewBox="0 0 64 64"><g fill="none" stroke="url(#gb)" stroke-width="3.600"><circle cx="31.900" cy="31.800" r="30.300"/><ellipse cx="31.900" cy="31.800" rx="15.100" ry="30.300"/><path d="M31.900 1.500 V62.100 M1.600 32 H62.200 M6 16.800 H58 M6 47.100 H58"/></g></svg>
<div class="t q" style="left:399px;top:263px;font-size:20.6px;line-height:28px;font-weight:bold;color:#4c4d49;transform:scaleX(1.135);transform-origin:0 0;margin-top:1px;">Web</div><div class="t q" style="left:399px;top:302px;font-size:18.2px;line-height:22px;color:#54555c;transform:scaleX(1.058);transform-origin:0 0;margin-top:1px;">Web Browser</div>
</div>

</body>
</html>
